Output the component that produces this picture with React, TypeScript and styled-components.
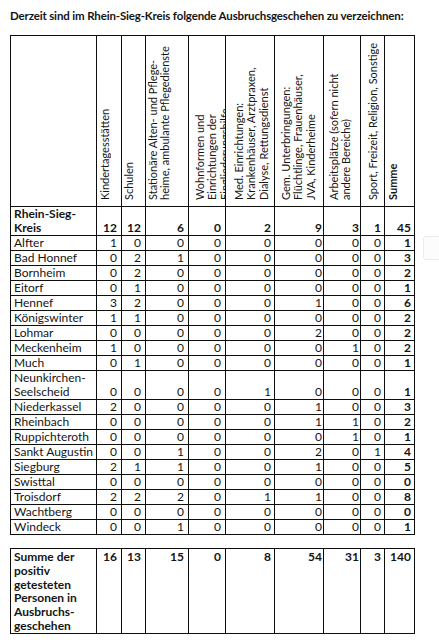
import React from 'react';
import styled, { createGlobalStyle } from 'styled-components';

const GlobalStyle = createGlobalStyle`
  html, body {
    margin: 0;
    padding: 0;
    background: #ffffff;
  }
  body {
    font-family: Lato, "Liberation Sans", sans-serif;
    color: #151515;
  }
`;

const Page = styled.div`
  position: relative;
  width: 439px;
  height: 640px;
  box-sizing: border-box;
  padding: 9px 0 0 10px;
  overflow: hidden;
`;

const Title = styled.h1`
  margin: 0;
  font-size: 11.5px;
  line-height: 14px;
  font-weight: 700;
  letter-spacing: -0.15px;
  white-space: nowrap;
`;

const Table = styled.table<{ $gap: number }>`
  border-collapse: collapse;
  table-layout: fixed;
  width: 405px;
  margin-top: ${({ $gap }) => $gap}px;
  font-size: 12px;
  line-height: 14px;

  td,
  th {
    border: 1px solid #0e0e0e;
    padding: 0;
  }
`;

const HeadCell = styled.th`
  height: 164px;
  padding: 0 0 6px 0 !important;
  vertical-align: bottom;
  font-weight: 400;
  text-align: left;
  overflow: hidden;
`;

const HeadLabel = styled.div<{ $inset: number; $bold?: boolean }>`
  writing-mode: vertical-rl;
  transform: rotate(180deg);
  box-sizing: border-box;
  width: 100%;
  height: 160px;
  padding-right: ${({ $inset }) => $inset}px;
  font-size: 11px;
  line-height: 12.3px;
  font-weight: ${({ $bold }) => ($bold ? 700 : 400)};
  white-space: nowrap;
  overflow: hidden;
`;

const NameCell = styled.td<{ $bold?: boolean }>`
  height: 14px;
  padding-left: 3px !important;
  text-align: left;
  vertical-align: bottom;
  white-space: nowrap;
  font-weight: ${({ $bold }) => ($bold ? 700 : 400)};
`;

const NumCell = styled.td<{ $pad: number; $bold?: boolean; $top?: boolean }>`
  text-align: right;
  vertical-align: ${({ $top }) => ($top ? 'top' : 'bottom')};
  padding-right: ${({ $pad }) => $pad}px !important;
  padding-top: ${({ $top }) => ($top ? 1 : 0)}px !important;
  font-weight: ${({ $bold }) => ($bold ? 700 : 400)};
`;

const SumLabel = styled.td`
  vertical-align: top;
  padding: 1px 0 0 3px !important;
  font-weight: 700;
  line-height: 13.8px;
  height: 83px;
`;

const SideTab = styled.div`
  position: absolute;
  left: 423px;
  top: 236px;
  width: 20px;
  height: 22px;
  border: 1px solid #ececec;
  border-radius: 3px;
  background: #fcfcfc;
`;

type Column = { lines: string[]; width: number; inset: number; pad: number; bold?: boolean };

const columns: Column[] = [
  { lines: ['Kindertagesstätten'], width: 25, inset: 2, pad: 4 },
  { lines: ['Schulen'], width: 24, inset: 1, pad: 4 },
  { lines: ['Stationäre Alten- und Pflege-', 'heime, ambulante Pflegedienste'], width: 43, inset: 1, pad: 4 },
  { lines: ['Wohnformen und', 'Einrichtungen der', 'Eingliederungshilfe'], width: 37, inset: 5, pad: 4 },
  { lines: ['Med. Einrichtungen:', 'Krankenhäuser, Arztpraxen,', 'Dialyse, Rettungsdienst'], width: 49, inset: 7, pad: 3 },
  { lines: ['Gem. Unterbringungen:', 'Flüchtlinge, Frauenhäuser,', 'JVA, Kinderheime'], width: 49, inset: 5, pad: 1 },
  { lines: ['Arbeitsplätze (sofern nicht', 'andere Bereiche)'], width: 37, inset: 4, pad: 1 },
  { lines: ['Sport, Freizeit, Religion, Sonstige'], width: 24, inset: 6, pad: 3 },
  { lines: ['Summe'], width: 30, inset: 2, pad: 3, bold: true },
];

type Row = { name: string[]; values: number[]; bold?: boolean };

const rows: Row[] = [
  { name: ['Rhein-Sieg-', 'Kreis'], values: [12, 12, 6, 0, 2, 9, 3, 1, 45], bold: true },
  { name: ['Alfter'], values: [1, 0, 0, 0, 0, 0, 0, 0, 1] },
  { name: ['Bad Honnef'], values: [0, 2, 1, 0, 0, 0, 0, 0, 3] },
  { name: ['Bornheim'], values: [0, 2, 0, 0, 0, 0, 0, 0, 2] },
  { name: ['Eitorf'], values: [0, 1, 0, 0, 0, 0, 0, 0, 1] },
  { name: ['Hennef'], values: [3, 2, 0, 0, 0, 1, 0, 0, 6] },
  { name: ['Königswinter'], values: [1, 1, 0, 0, 0, 0, 0, 0, 2] },
  { name: ['Lohmar'], values: [0, 0, 0, 0, 0, 2, 0, 0, 2] },
  { name: ['Meckenheim'], values: [1, 0, 0, 0, 0, 0, 1, 0, 2] },
  { name: ['Much'], values: [0, 1, 0, 0, 0, 0, 0, 0, 1] },
  { name: ['Neunkirchen-', 'Seelscheid'], values: [0, 0, 0, 0, 1, 0, 0, 0, 1] },
  { name: ['Niederkassel'], values: [2, 0, 0, 0, 0, 1, 0, 0, 3] },
  { name: ['Rheinbach'], values: [0, 0, 0, 0, 0, 1, 1, 0, 2] },
  { name: ['Ruppichteroth'], values: [0, 0, 0, 0, 0, 0, 1, 0, 1] },
  { name: ['Sankt Augustin'], values: [0, 0, 1, 0, 0, 2, 0, 1, 4] },
  { name: ['Siegburg'], values: [2, 1, 1, 0, 0, 1, 0, 0, 5] },
  { name: ['Swisttal'], values: [0, 0, 0, 0, 0, 0, 0, 0, 0] },
  { name: ['Troisdorf'], values: [2, 2, 2, 0, 1, 1, 0, 0, 8] },
  { name: ['Wachtberg'], values: [0, 0, 0, 0, 0, 0, 0, 0, 0] },
  { name: ['Windeck'], values: [0, 0, 1, 0, 0, 0, 0, 0, 1] },
];

const totals = [16, 13, 15, 0, 8, 54, 31, 3, 140];

const withBreaks = (lines: string[]) =>
  lines.map((line, i) => (
    <React.Fragment key={i}>
      {i > 0 && <br />}
      {line}
    </React.Fragment>
  ));

const ColGroup = () => (
  <colgroup>
    <col style={{ width: 86 }} />
    {columns.map((c, i) => (
      <col key={i} style={{ width: c.width }} />
    ))}
  </colgroup>
);

export default function App() {
  return (
    <>
      <GlobalStyle />
      <Page>
        <Title>Derzeit sind im Rhein-Sieg-Kreis folgende Ausbruchsgeschehen zu verzeichnen:</Title>

        <Table $gap={12}>
          <ColGroup />
          <thead>
            <tr>
              <HeadCell />
              {columns.map((c, i) => (
                <HeadCell key={i}>
                  <HeadLabel $inset={c.inset} $bold={c.bold}>
                    {withBreaks(c.lines)}
                  </HeadLabel>
                </HeadCell>
              ))}
            </tr>
          </thead>
          <tbody>
            {rows.map((row) => (
              <tr key={row.name.join('')}>
                <NameCell $bold={row.bold}>{withBreaks(row.name)}</NameCell>
                {row.values.map((v, i) => (
                  <NumCell key={i} $pad={columns[i].pad} $bold={row.bold || columns[i].bold}>
                    {v}
                  </NumCell>
                ))}
              </tr>
            ))}
          </tbody>
        </Table>

        <Table $gap={13}>
          <ColGroup />
          <tbody>
            <tr>
              <SumLabel>
                {withBreaks(['Summe der', 'positiv', 'getesteten', 'Personen in', 'Ausbruchs-', 'geschehen'])}
              </SumLabel>
              {totals.map((v, i) => (
                <NumCell key={i} $pad={columns[i].pad} $bold $top>
                  {v}
                </NumCell>
              ))}
            </tr>
          </tbody>
        </Table>

        <SideTab />
      </Page>
    </>
  );
}
